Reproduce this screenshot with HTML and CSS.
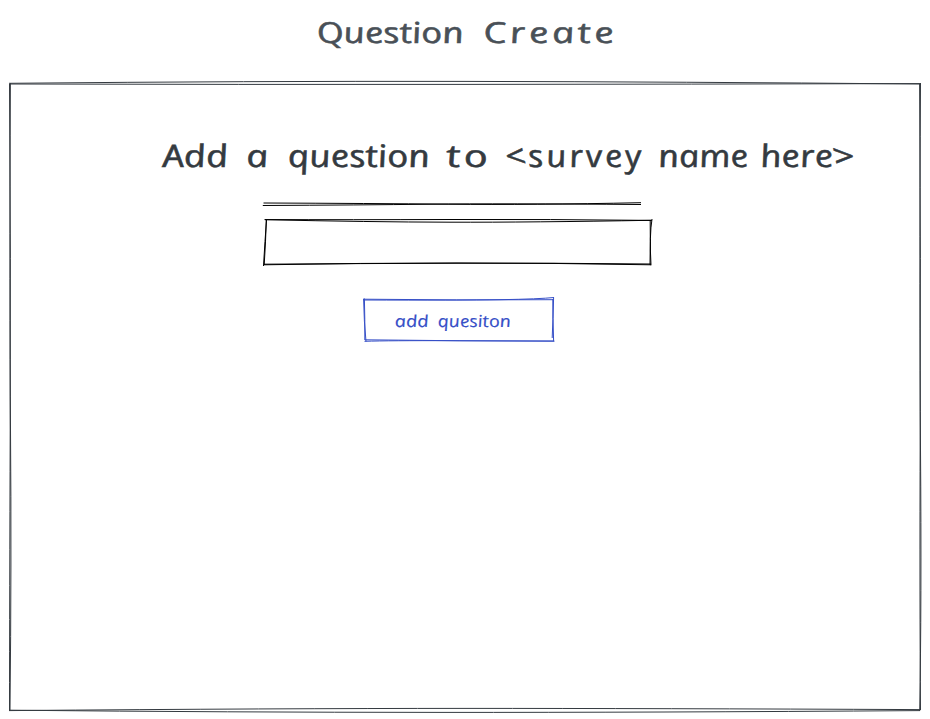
FILE: index.html
```
<!DOCTYPE html>
<html lang="en">
<head>
<meta charset="utf-8">
<title>Question Create</title>
<link rel="stylesheet" href="styles.css">
</head>
<body>
<main class="page">
  <h1 class="title">
    <svg class="lettering" width="320" height="60" viewBox="310 0 320 60">
      <g transform="translate(0 42.5) skewX(13)">
        <text x="318.5" textLength="147" lengthAdjust="spacingAndGlyphs">Question</text>
        <text class="loose" x="485" textLength="134" lengthAdjust="spacingAndGlyphs">Create</text>
      </g>
    </svg>
  </h1>
  <section class="frame">
    <svg class="sketch" viewBox="0 76 930 643">
      <path d="M9 83.3Q250 81 465 81.4T920 84M10 84Q240 84.6 465 84.4T920 83.6"/>
      <path d="M919.6 84Q920.8 260 920.2 430T920.5 710M920.5 83Q919.3 300 920.5 450T919.7 711"/>
      <path d="M920 709.6Q650 708.4 465 708.4T9 710.6M920 710.6Q650 712.5 440 712.4T10 710.2"/>
      <path d="M9.5 84Q10.8 260 10.2 430T9.5 711M10.4 83Q9.4 300 10.5 430T10 710"/>
    </svg>
    <h2 class="heading">
      <svg class="lettering" width="710" height="60" viewBox="155 126 710 60">
        <g transform="translate(0 166.5) skewX(12)">
          <text x="164" textLength="66" lengthAdjust="spacingAndGlyphs">Add</text>
          <text x="248" textLength="22" lengthAdjust="spacingAndGlyphs">a</text>
          <text x="289.5" textLength="142" lengthAdjust="spacingAndGlyphs">question</text>
          <text class="loose" x="448" textLength="45" lengthAdjust="spacingAndGlyphs">to</text>
          <text class="loose" x="507" textLength="139" lengthAdjust="spacingAndGlyphs">&lt;survey</text>
          <text x="660" textLength="90" lengthAdjust="spacingAndGlyphs">name</text>
          <text x="762" textLength="94" lengthAdjust="spacingAndGlyphs">here&gt;</text>
        </g>
      </svg>
    </h2>
    <svg class="rule" width="380" height="8" viewBox="262 200 380 8">
      <path d="M263.5 203Q370 203.4 450 204.2T641 202.7M262.8 205.5Q360 205 430 204.2T641 204.5"/>
    </svg>
    <div class="field">
      <svg class="sketch" viewBox="262 217 392 50">
        <path d="M264.5 219.6Q350 219.8 450 219.5T652 220.4M265 219.7Q370 222 450 222.2T651 220.3"/>
        <path d="M650.2 220Q650.5 240 650 265M652 219Q649.3 235 651 265.3"/>
        <path d="M264 264.8Q360 263 457 263T651 264.8M264 264.2Q360 263.5 457 263.2T651 264"/>
        <path d="M266.5 220Q265 240 263.5 266M266.3 219.5Q265.8 240 264.2 265"/>
      </svg>
    </div>
    <button class="button" type="button">
      <svg class="sketch" viewBox="361 295 196 50">
        <path d="M363 299.2Q455 300.3 553 299.7M363.5 300Q460 300.4 500 299.7T554 297.5"/>
        <path d="M553.6 297.5Q552.5 318 553.6 341M552.8 299Q553.3 320 552.2 338"/>
        <path d="M365 339.8Q460 341 554.5 341.2M364.5 341.3Q390 340.5 450 340.7T554 341"/>
        <path d="M364.4 298.5Q365 320 364.8 340M363.6 299Q364 322 366 341.5"/>
      </svg>
      <svg class="lettering" width="130" height="30" viewBox="391 305 130 30">
        <g transform="translate(0 326.5) skewX(10)">
          <text x="395.5" textLength="34" lengthAdjust="spacingAndGlyphs">add</text>
          <text x="438.5" textLength="73" lengthAdjust="spacingAndGlyphs">quesiton</text>
        </g>
      </svg>
    </button>
  </section>
</main>
</body>
</html>
```
FILE: styles.css
```
* { box-sizing: border-box; }
body {
  margin: 0;
  background: #fff;
  font-family: Virgil, "Open Sans", "Noto Sans", sans-serif;
}
svg { display: block; }
.page {
  display: flex;
  flex-direction: column;
  height: 719px;
}
.title, .heading { margin: 0; font-weight: 400; }
.title {
  height: 76px;
  padding-left: 310px;
  font-size: 29px;
  color: #495057;
}
.frame {
  position: relative;
  flex: 1;
  display: flex;
  flex-direction: column;
  align-items: flex-start;
  padding-top: 50px;
  color: #343a40;
}
.sketch {
  position: absolute;
  inset: 0;
  width: 100%;
  height: 100%;
}
.sketch path, .rule path {
  fill: none;
  stroke: currentColor;
  stroke-width: 1;
}
.lettering { overflow: visible; }
.lettering text {
  font-style: italic;
  fill: currentColor;
  stroke: currentColor;
  stroke-width: 0.5;
}
.lettering .loose { letter-spacing: 2.5px; }
.heading { margin-left: 155px; font-size: 31px; }
.rule { margin: 14px 0 0 262px; color: #000; }
.field {
  position: relative;
  width: 392px;
  height: 50px;
  margin: 9px 0 0 262px;
  color: #000;
}
.button {
  position: relative;
  width: 196px;
  height: 50px;
  margin: 28px 0 0 361px;
  padding: 10px 30px;
  border: 0;
  background: none;
  color: #364fc7;
  font-family: inherit;
  font-size: 16.5px;
}
.button .lettering text { stroke-width: 0.15; }
```
